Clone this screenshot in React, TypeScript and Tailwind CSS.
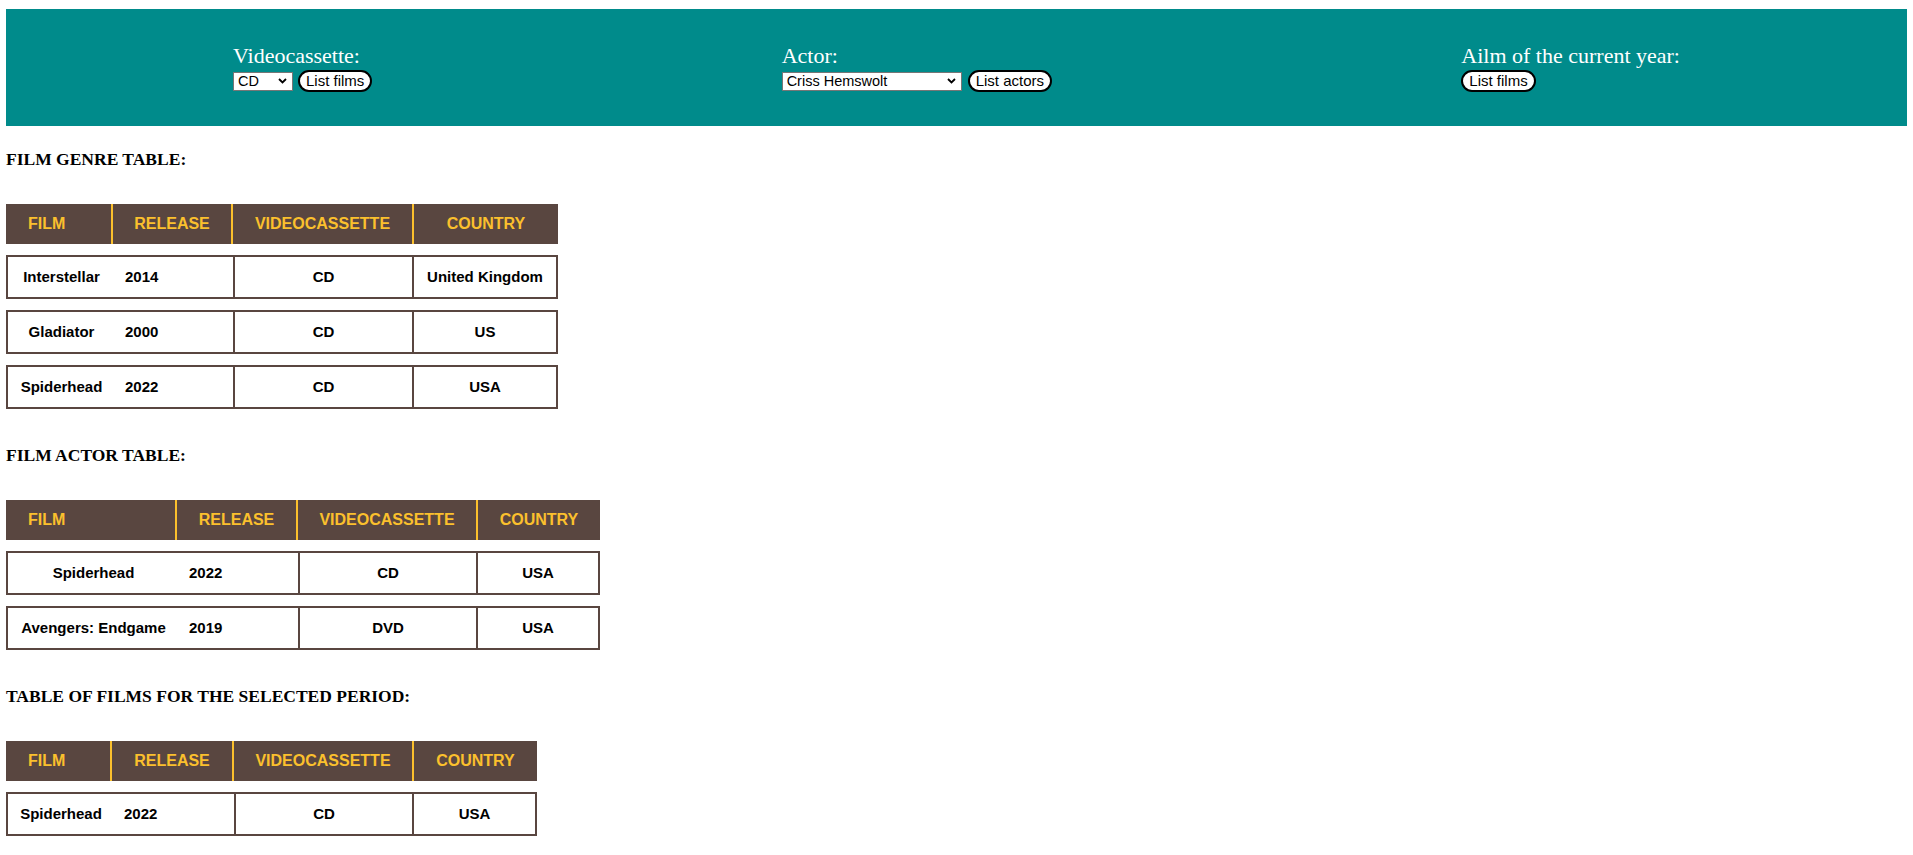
import React from 'react';

type Film = { film: string; release: string; cassette: string; country: string };

type FilmTable = {
  title: string;
  cols: string;
  filmW: string;
  rows: Film[];
};

const tables: FilmTable[] = [
  {
    title: 'FILM GENRE TABLE:',
    cols: 'grid-cols-[107px_120px_181px_144px]',
    filmW: 'w-[107px]',
    rows: [
      { film: 'Interstellar', release: '2014', cassette: 'CD', country: 'United Kingdom' },
      { film: 'Gladiator', release: '2000', cassette: 'CD', country: 'US' },
      { film: 'Spiderhead', release: '2022', cassette: 'CD', country: 'USA' },
    ],
  },
  {
    title: 'FILM ACTOR TABLE:',
    cols: 'grid-cols-[171px_121px_180px_122px]',
    filmW: 'w-[171px]',
    rows: [
      { film: 'Spiderhead', release: '2022', cassette: 'CD', country: 'USA' },
      { film: 'Avengers: Endgame', release: '2019', cassette: 'DVD', country: 'USA' },
    ],
  },
  {
    title: 'TABLE OF FILMS FOR THE SELECTED PERIOD:',
    cols: 'grid-cols-[106px_122px_180px_123px]',
    filmW: 'w-[106px]',
    rows: [{ film: 'Spiderhead', release: '2022', cassette: 'CD', country: 'USA' }],
  },
];

const Chevron = () => (
  <svg width="9" height="6" viewBox="0 0 9 6" className="pointer-events-none absolute right-[6px] top-1/2 -translate-y-1/2">
    <polyline points="1,1 4.5,4.5 8,1" fill="none" stroke="#000" strokeWidth="1.8" />
  </svg>
);

const Select = ({ width, options }: { width: string; options: string[] }) => (
  <div className={`relative ${width}`}>
    <select className="h-[19px] w-full appearance-none border border-[#767676] bg-white pl-[4px] text-[14.5px] leading-[17px] text-black outline-none">
      {options.map((o) => (
        <option key={o}>{o}</option>
      ))}
    </select>
    <Chevron />
  </div>
);

const PillButton = ({ children }: { children: React.ReactNode }) => (
  <button className="h-[22px] rounded-full border-2 border-black bg-white px-[6px] text-[15px] leading-[18px] text-black">
    {children}
  </button>
);

const Toolbar = () => (
  <div className="flex h-[117px] items-center justify-between bg-[#008b8b] px-[227px] text-white">
    <div className="flex flex-col">
      <span className="mb-[1px] font-['Liberation_Serif',serif] text-[22px] leading-[25px]">Videocassette:</span>
      <div className="flex items-center gap-[5px] font-['Liberation_Sans',Arial,sans-serif]">
        <Select width="w-[60px]" options={['CD', 'DVD']} />
        <PillButton>List films</PillButton>
      </div>
    </div>
    <div className="flex flex-col">
      <span className="mb-[1px] font-['Liberation_Serif',serif] text-[22px] leading-[25px]">Actor:</span>
      <div className="flex items-center gap-[6px] font-['Liberation_Sans',Arial,sans-serif]">
        <Select width="w-[180px]" options={['Criss Hemswolt', 'Miles Teller', 'Russell Crowe']} />
        <PillButton>List actors</PillButton>
      </div>
    </div>
    <div className="flex flex-col items-start">
      <span className="mb-[1px] font-['Liberation_Serif',serif] text-[22px] leading-[25px]">Ailm of the current year:</span>
      <div className="font-['Liberation_Sans',Arial,sans-serif]">
        <PillButton>List films</PillButton>
      </div>
    </div>
  </div>
);

const TableBlock = ({ t }: { t: FilmTable }) => (
  <section>
    <h3 className="font-['Liberation_Serif',serif] text-[17.5px] font-bold leading-[18px] text-black">{t.title}</h3>
    <div className="mt-[36px] inline-block font-['Liberation_Sans',Arial,sans-serif] font-bold">
      <div className={`grid ${t.cols} h-[40px] bg-[#594640] text-[16px] text-[#fbc02d]`}>
        <div className="flex items-center border-r-2 border-[#fbc02d] pl-[22px]">FILM</div>
        <div className="flex items-center justify-center border-r-2 border-[#fbc02d]">RELEASE</div>
        <div className="flex items-center justify-center border-r-2 border-[#fbc02d]">VIDEOCASSETTE</div>
        <div className="flex items-center justify-center">COUNTRY</div>
      </div>
      {t.rows.map((r, i) => (
        <div key={i} className={`mt-[11px] grid ${t.cols} h-[44px] text-[15px] text-black`}>
          <div className="col-span-2 flex items-center border-y-2 border-l-2 border-[#594640]">
            <span className={`${t.filmW} text-center`}>{r.film}</span>
            <span className="pl-[10px]">{r.release}</span>
          </div>
          <div className="flex items-center justify-center border-2 border-[#594640]">{r.cassette}</div>
          <div className="flex items-center justify-center border-y-2 border-r-2 border-[#594640]">{r.country}</div>
        </div>
      ))}
    </div>
  </section>
);

export default function App() {
  return (
    <div className="min-h-screen bg-white px-[6px] pt-[9px] pb-[20px]">
      <Toolbar />
      <div className="mt-[24px] flex flex-col gap-[37px]">
        {tables.map((t) => (
          <TableBlock key={t.title} t={t} />
        ))}
      </div>
    </div>
  );
}
